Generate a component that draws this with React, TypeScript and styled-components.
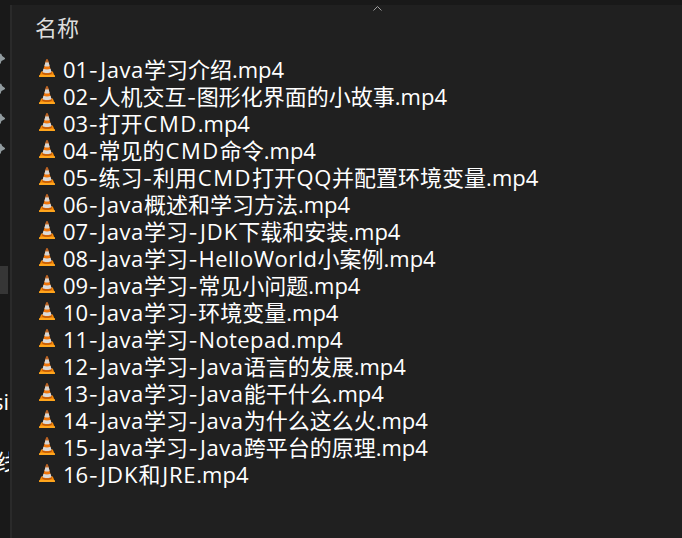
import React from "react";
import styled, { createGlobalStyle } from "styled-components";

const GlobalStyle = createGlobalStyle`
  body {
    margin: 0;
    background: #191919;
    overflow: hidden;
  }
`;

const Window = styled.div`
  display: grid;
  grid-template-columns: 10px 1fr;
  grid-template-rows: 5px 533px;
  width: 682px;
  height: 538px;
  overflow: hidden;
  background: #191919;
  color: #fff;
  font-family: "Open Sans", "Noto Sans CJK SC", sans-serif;
  font-size: 22px;
`;

const TopEdge = styled.div`
  grid-column: 1 / -1;
`;

const Sidebar = styled.nav`
  display: flex;
  flex-direction: column;
  width: 9px;
  overflow: hidden;
`;

const Pins = styled.div`
  display: flex;
  flex-direction: column;
  gap: 18px;
  padding-top: 48px;
  height: 261px;
  box-sizing: border-box;
`;

const PinIcon = styled.svg`
  display: block;
  width: 6px;
  height: 12px;
`;

const Selected = styled.div`
  width: 8px;
  height: 28px;
  background: #363636;
`;

const SideLabel = styled.div<{ $gap: number; $overhang?: number }>`
  display: flex;
  justify-content: flex-end;
  width: ${(p) => 9 + (p.$overhang ?? 0)}px;
  height: 30px;
  margin-top: ${(p) => p.$gap}px;
  line-height: 30px;
  white-space: nowrap;
`;

const Panel = styled.main`
  background: #202020;
  border-left: 2px solid #2a2a2a;
  overflow: hidden;
`;

const Header = styled.header`
  display: grid;
  grid-template-columns: 338px 12px;
  height: 51px;
  padding-left: 23px;
  color: #dedede;
`;

const Title = styled.span`
  line-height: 44px;
`;

const SortArrow = styled.svg`
  width: 12px;
  height: 8px;
`;

const List = styled.ul`
  margin: 0;
  padding: 0 0 0 26px;
  list-style: none;
`;

const Row = styled.li`
  display: flex;
  height: 27px;
  line-height: 27px;
  white-space: pre;
`;

const Cone = styled.svg`
  flex: none;
  width: 18px;
  height: 19px;
  margin: 3px 7px 0 0;
`;

const Run = styled.span<{ $lead: number; $spacing: number }>`
  padding-left: ${(p) => p.$lead}px;
  letter-spacing: ${(p) => p.$spacing}px;
`;

const Hyphen = styled.span`
  display: inline-block;
  width: 10.3px;
  line-height: 20px;
  font-family: Inter, sans-serif;
  font-size: 20px;
  text-align: center;
`;

const files = [
  "01-Java学习介绍.mp4",
  "02-人机交互-图形化界面的小故事.mp4",
  "03-打开CMD.mp4",
  "04-常见的CMD命令.mp4",
  "05-练习-利用CMD打开QQ并配置环境变量.mp4",
  "06-Java概述和学习方法.mp4",
  "07-Java学习-JDK下载和安装.mp4",
  "08-Java学习-HelloWorld小案例.mp4",
  "09-Java学习-常见小问题.mp4",
  "10-Java学习-环境变量.mp4",
  "11-Java学习-Notepad.mp4",
  "12-Java学习-Java语言的发展.mp4",
  "13-Java学习-Java能干什么.mp4",
  "14-Java学习-Java为什么这么火.mp4",
  "15-Java学习-Java跨平台的原理.mp4",
  "16-JDK和JRE.mp4",
];

// Tracking for each kind of run: [space before it, letter spacing].
const tracking: Record<string, [number, number]> = {
  Java: [1.7, 0.6],
  JDK: [1.7, 1],
  JRE: [1.7, 0.8],
  CMD: [1, 1.55],
  QQ: [0.4, 0.7],
  HelloWorld: [0.3, 0.45],
  Notepad: [0.3, 0.4],
};

function FileName({ name }: { name: string }) {
  const runs = name.match(/\.mp4|-|[A-Za-z]+|[^A-Za-z.-]+/g) ?? [];
  return (
    <span>
      {runs.map((run, i) => {
        if (run === "-") return <Hyphen key={i}>-</Hyphen>;
        const [lead, spacing] = tracking[run] ?? [0, 0];
        return (
          <Run key={i} $lead={lead} $spacing={spacing}>
            {run}
          </Run>
        );
      })}
    </span>
  );
}

function VideoIcon() {
  return (
    <Cone viewBox="0 0 18 19">
      <path d="M3.2 12.5h11.6L17 18H1z" fill="#f58a0b" />
      <path d="M1.4 16h15.2l.4 2H1z" fill="#ffa51c" />
      <path d="M4 14.2c2 2 8 2 10 0l-.6-2H4.6z" fill="#b95508" />
      <path d="M8.2.4h1.6L13.5 13.4c-2 1.5-7 1.5-9 0z" fill="#ee750b" />
      <path d="M7.4 3.2h3.2l1 3.7c-1 .7-4.2.7-5.2 0z" fill="#d5d5d5" />
      <path d="M5.5 9.8c1.8.9 5.2.9 7 0l1 3.1c-2 1.5-7 1.5-9 0z" fill="#dadada" />
      <path d="M8.2.4h1.6l.8 2.8H7.4z" fill="#bb6428" />
    </Cone>
  );
}

export default function App() {
  return (
    <>
      <GlobalStyle />
      <Window>
        <TopEdge />
        <Sidebar>
          <Pins>
            {[0, 1, 2, 3].map((i) => (
              <PinIcon key={i} viewBox="0 0 6 12">
                <path d="M0 .7h1.2l1 2.2 2.8 2v1.2L3 7.3 1.4 8 .8 10.2 0 11z" fill="#919b9f" />
              </PinIcon>
            ))}
          </Pins>
          <Selected />
          <SideLabel $gap={92}>si</SideLabel>
          <SideLabel $gap={30} $overhang={9}>线</SideLabel>
        </Sidebar>
        <Panel>
          <Header>
            <Title>名称</Title>
            <SortArrow viewBox="0 0 12 8">
              <path d="M0.5 5.5L4.5 1.5L8.5 5.5" fill="none" stroke="#a0a0a0" strokeWidth="1" />
            </SortArrow>
          </Header>
          <List>
            {files.map((name) => (
              <Row key={name}>
                <VideoIcon />
                <FileName name={name} />
              </Row>
            ))}
          </List>
        </Panel>
      </Window>
    </>
  );
}
